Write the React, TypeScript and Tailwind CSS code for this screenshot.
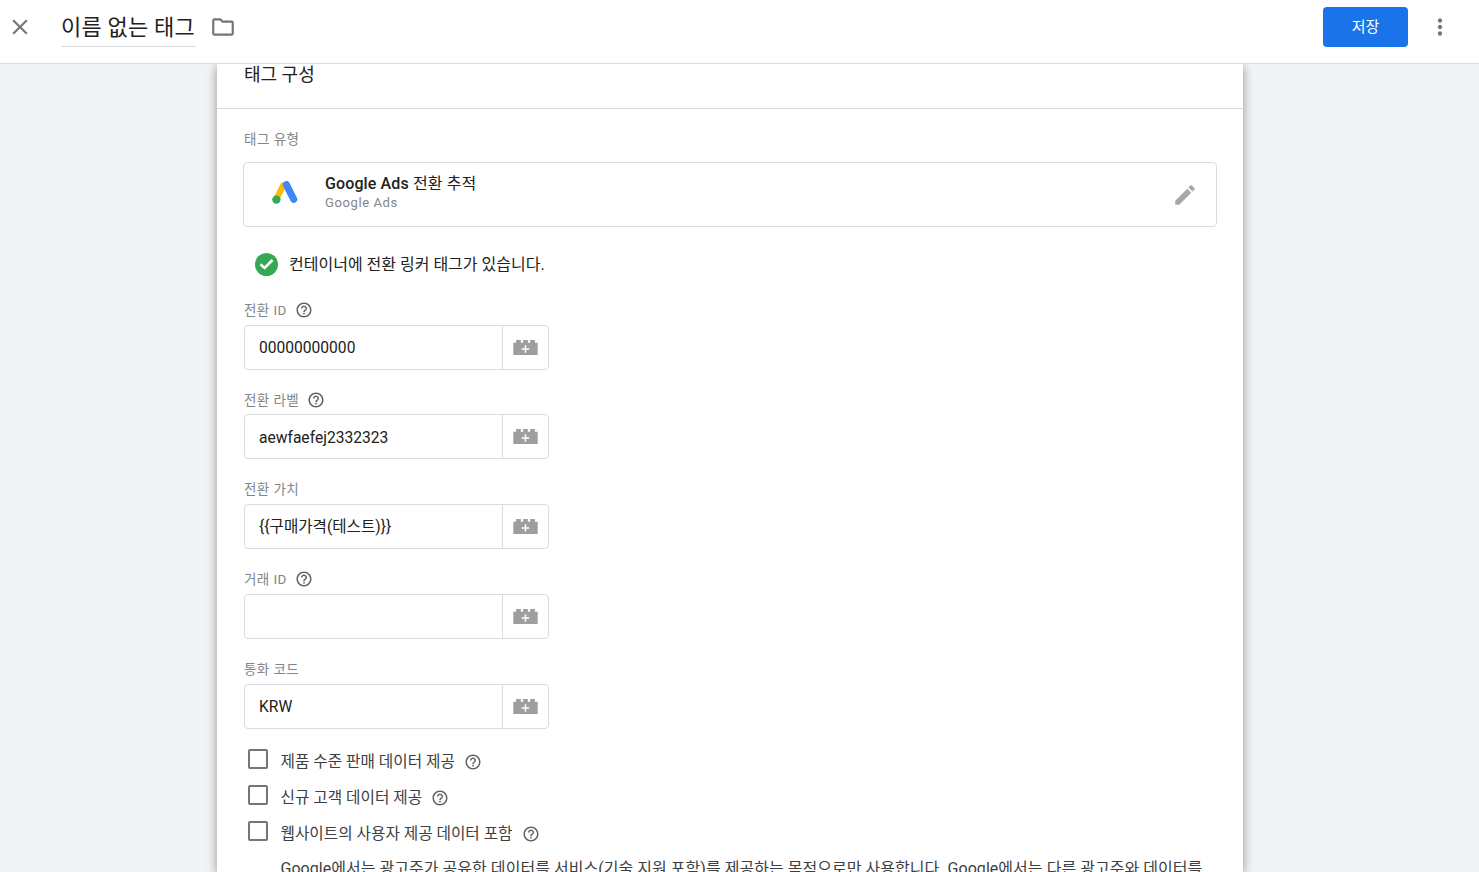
import { MdClose, MdEdit, MdHelpOutline, MdMoreVert, MdOutlineFolder } from "react-icons/md";

const FONT = "font-['Roboto','Noto_Sans_CJK_KR',sans-serif]";

const fields = [
  { label: "전환 ID", value: "00000000000", help: true },
  { label: "전환 라벨", value: "aewfaefej2332323", help: true },
  { label: "전환 가치", value: "{{구매가격(테스트)}}", help: false },
  { label: "거래 ID", value: "", help: true },
  { label: "통화 코드", value: "KRW", help: false },
];

const checks = ["제품 수준 판매 데이터 제공", "신규 고객 데이터 제공", "웹사이트의 사용자 제공 데이터 포함"];

// variable picker button, the little lego brick
function BrickIcon() {
  return (
    <svg width="25" height="15" viewBox="0 0 26 16" className="block">
      <path
        d="M0 3h3V0h5v3h2.5V0h5v3H18V0h5v3h3v13H0z"
        fill="#9e9e9e"
      />
      <path d="M12.2 5.5h1.6v3.2H17v1.6h-3.2v3.2h-1.6v-3.2H9V8.7h3.2z" fill="#fff" />
    </svg>
  );
}

function AdsLogo() {
  return (
    <svg width="26" height="24" viewBox="0 0 26 24" className="block">
      <path d="M9.6 1 1.8 16.2l5.2 3 7.8-15z" fill="#fbbc04" />
      <path
        d="M11 5a3.6 3.6 0 0 1 6.3-3.4l7.6 15.2c.9 1.7.2 3.9-1.5 4.8-1.8.9-3.9.2-4.8-1.5z"
        fill="#4285f4"
      />
      <circle cx="4.4" cy="18.6" r="4.2" fill="#34a853" />
    </svg>
  );
}

function Help({ className = "" }: { className?: string }) {
  return <MdHelpOutline className={`shrink-0 text-[#5f6368] ${className}`} size={18} />;
}

export default function App() {
  return (
    <div className={`${FONT} flex h-[872px] flex-col overflow-hidden bg-[#f1f3f4] text-[#212121]`}>
      {/* Top bar */}
      <header className="relative z-10 flex h-[64px] shrink-0 items-center border-b border-[#dadce0] bg-white pb-[9px] pl-[7px] pr-[26px]">
        <MdClose size={26} className="text-[#757575]" />
        <div className="ml-[28px] flex h-[40px] items-center border-b border-[#dadce0] pt-[3px]">
          <span className="pr-[1px] text-[22px] leading-none tracking-[0.2px] text-[#212121]">이름 없는 태그</span>
        </div>
        <MdOutlineFolder size={26} className="ml-[14px] text-[#757575]" />
        <button className="ml-auto h-[40px] w-[85px] rounded-[4px] bg-[#1a73e8] text-[15px] text-white">
          저장
        </button>
        <MdMoreVert size={26} className="ml-[19px] text-[#757575]" />
      </header>

      <main className="flex min-h-0 flex-1 justify-center pr-[19px]">
        <section className="w-[1026px] shrink-0 bg-white shadow-[0_2px_10px_rgba(0,0,0,0.4)]">
          <div className="h-[45px] border-b border-[#dadce0] pl-[27px]">
            <h2 className="pt-[1px] text-[18px] leading-[20px] font-normal">태그 구성</h2>
          </div>

          <div className="pl-[26px] pr-[26px]">
            <p className="mt-[21px] pl-[1px] text-[13.5px] leading-[18px] tracking-[0.5px] text-[#80868b]">태그 유형</p>

            <div className="mt-[14px] flex h-[65px] items-center rounded-[4px] border border-[#dadce0] pl-[28px] pr-[18px]">
              <span className="mb-[3px]">
                <AdsLogo />
              </span>
              <div className="mb-[4px] ml-[27px] flex-1">
                <p className="text-[16px] leading-[20px] font-medium tracking-[0.12px] text-[#212121]">
                  Google Ads <span className="font-normal">전환 추적</span>
                </p>
                <p className="text-[13px] leading-[18px] tracking-[0.6px] text-[#80868b]">Google Ads</p>
              </div>
              <MdEdit size={26} className="text-[#a8a8a8]" />
            </div>

            <div className="mt-[25px] flex h-[24px] items-center pl-[12px]">
              <span className="flex h-[23px] w-[23px] items-center justify-center rounded-full bg-[#34a853]">
                <svg width="15" height="12" viewBox="0 0 15 12" fill="none" className="block">
                  <path d="M1.5 6.2 5.6 10 13.5 2" stroke="#fff" strokeWidth="2.6" />
                </svg>
              </span>
              <span className="ml-[11px] pt-[1px] text-[16px] text-[#212121]">컨테이너에 전환 링커 태그가 있습니다.</span>
            </div>

            <div className="mt-[23.6px] flex flex-col gap-[19.75px] pl-[1px]">
              {fields.map((f) => (
                <div key={f.label}>
                  <div className="mb-[4px] flex h-[21px] items-center">
                    <span className="text-[13.5px] tracking-[0.4px] text-[#80868b]">{f.label}</span>
                    {f.help && <Help className="ml-[8px]" />}
                  </div>
                  <div className="flex h-[45px] w-[305px] items-center rounded-[4px] border border-[#dadce0]">
                    <span className="min-w-0 flex-1 pl-[14px] pt-[3px] text-[15.6px] text-[#212121]">{f.value}</span>
                    <span className="flex h-full w-[46px] items-center justify-center border-l border-[#dadce0]">
                      <BrickIcon />
                    </span>
                  </div>
                </div>
              ))}
            </div>

            <div className="mt-[20px] flex flex-col gap-[16px] pl-[5px]">
              {checks.map((c) => (
                <label key={c} className="flex h-[20px] items-center">
                  <span className="h-[20px] w-[20px] shrink-0 rounded-[2px] border-2 border-[#757575] bg-white" />
                  <span className="ml-[12.5px] mt-[7px] text-[15.7px] text-[#3c4043]">{c}</span>
                  <Help className="ml-[9px] mt-[6px]" />
                </label>
              ))}
            </div>

            <p className="ml-[37.5px] mt-[17px] whitespace-nowrap text-[16px] leading-[22px] tracking-[0.04px] text-[#3c4043]">
              Google에서는 광고주가 공유한 데이터를 서비스(기술 지원 포함)를 제공하는 목적으로만 사용합니다. Google에서는 다른 광고주와 데이터를
            </p>
          </div>
        </section>
      </main>
    </div>
  );
}
